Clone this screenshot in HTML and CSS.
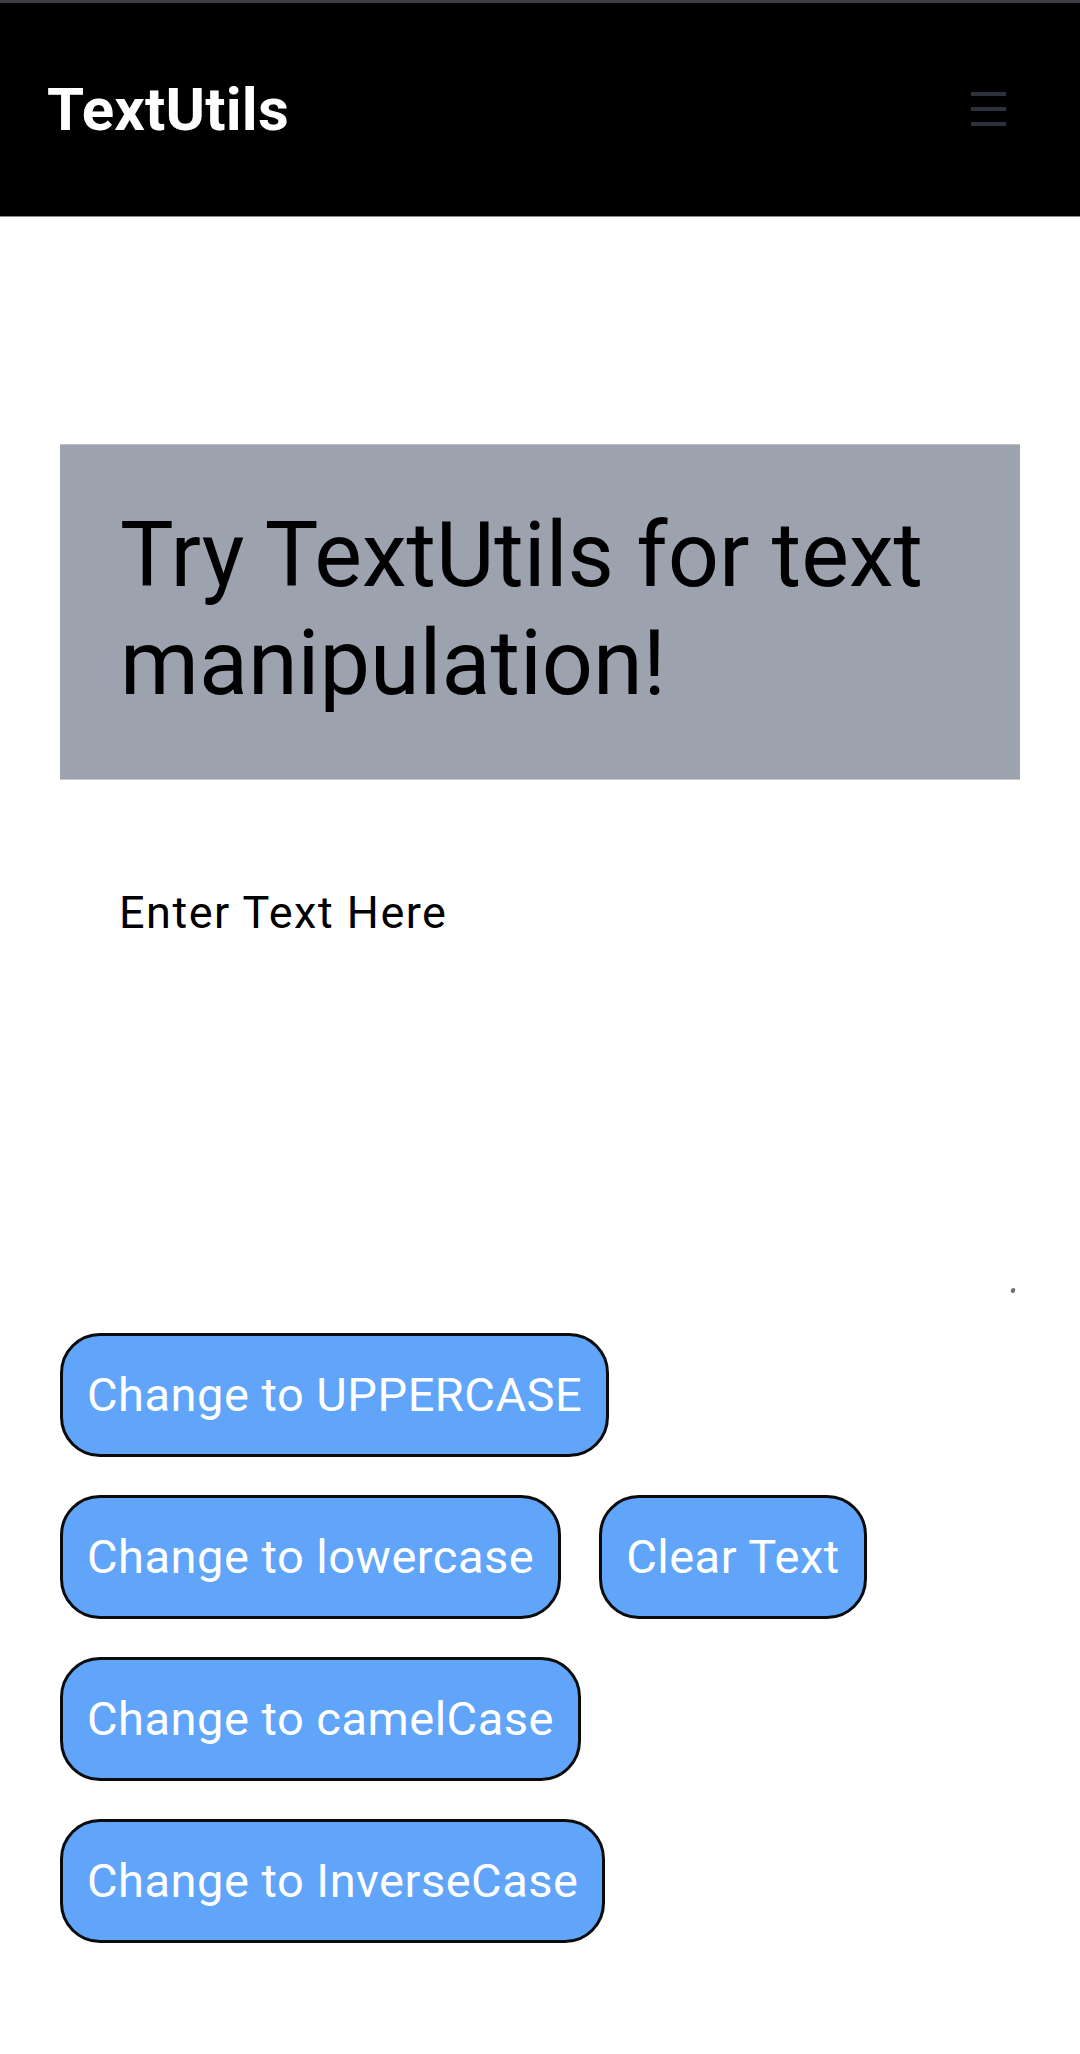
FILE: index.html
```html
<!DOCTYPE html>
<html lang="en">
<head>
<meta charset="utf-8">
<title>TextUtils</title>
<link rel="stylesheet" href="styles.css">
</head>
<body>
<header class="navbar">
  <a class="brand" href="#">TextUtils</a>
  <button class="menu-toggle" aria-label="Menu">
    <svg width="35" height="34" viewBox="0 0 35 34" aria-hidden="true">
      <rect x="0" y="0" width="35" height="4" fill="#2c323b"/>
      <rect x="0" y="15" width="35" height="4" fill="#2c323b"/>
      <rect x="0" y="30" width="35" height="4" fill="#2c323b"/>
    </svg>
  </button>
</header>
<main class="container">
  <section class="hero">
    <h1 class="hero-title">Try TextUtils for text manipulation!</h1>
  </section>
  <div class="editor">
    <textarea class="text-input" placeholder="Enter Text Here"></textarea>
    <span class="grip"></span>
  </div>
  <div class="actions">
    <button class="btn">Change to UPPERCASE</button>
    <button class="btn">Change to lowercase</button>
    <button class="btn">Clear Text</button>
    <button class="btn">Change to camelCase</button>
    <button class="btn">Change to InverseCase</button>
  </div>
</main>
</body>
</html>
```
FILE: styles.css
```css
* {
  box-sizing: border-box;
}

html, body {
  margin: 0;
  padding: 0;
  background: #ffffff;
  font-family: Roboto, "Noto Sans", "Liberation Sans", sans-serif;
  color: #000000;
}

.navbar {
  height: 217px;
  background: #000000;
  border-top: 3px solid #3c3e45;
  border-bottom: 1px solid #8a8a8a;
  display: flex;
  align-items: center;
  justify-content: space-between;
  padding: 0 74px 0 47px;
}

.brand {
  color: #ffffff;
  text-decoration: none;
  font-weight: 700;
  font-size: 60px;
  line-height: 60px;
  letter-spacing: 0.2px;
}

.menu-toggle {
  background: none;
  border: none;
  padding: 0;
  margin: 0;
  display: flex;
  margin-top: -1px;
}

.container {
  padding: 0 60px 60px 60px;
}

.hero {
  margin-top: 227px;
  background: #9ca3af;
  border-top: 1px solid #b9bec6;
  border-bottom: 1px solid #c9cdd3;
  padding: 57px 60px 61px 60px;
}

.hero-title {
  margin: 0;
  font-size: 90px;
  line-height: 108px;
  font-weight: 400;
  color: #000000;
}

.editor {
  position: relative;
  margin-top: 20px;
}

.text-input {
  display: block;
  width: 100%;
  height: 498px;
  border: none;
  outline: none;
  resize: none;
  background: #ffffff;
  padding: 80px 60px 20px 59px;
  font-family: Roboto, "Noto Sans", "Liberation Sans", sans-serif;
  font-size: 45px;
  line-height: 66px;
  letter-spacing: 1.5px;
  color: #000000;
}

.text-input::placeholder {
  color: #000000;
  opacity: 1;
}

.grip {
  position: absolute;
  right: 5px;
  bottom: 5px;
  width: 4px;
  height: 5px;
  border-radius: 2px;
  background: #6e6e6e;
  transform: rotate(30deg);
}

.actions {
  margin-top: 35px;
  display: flex;
  flex-wrap: wrap;
  gap: 38px;
}

.btn {
  background: #60a5fa;
  color: #ffffff;
  border: 3px solid #0b0b0b;
  border-radius: 40px;
  padding: 31px 24px;
  font-family: Roboto, "Noto Sans", "Liberation Sans", sans-serif;
  font-size: 47px;
  line-height: 56px;
  font-weight: 400;
  letter-spacing: 0.5px;
  cursor: pointer;
}
```
